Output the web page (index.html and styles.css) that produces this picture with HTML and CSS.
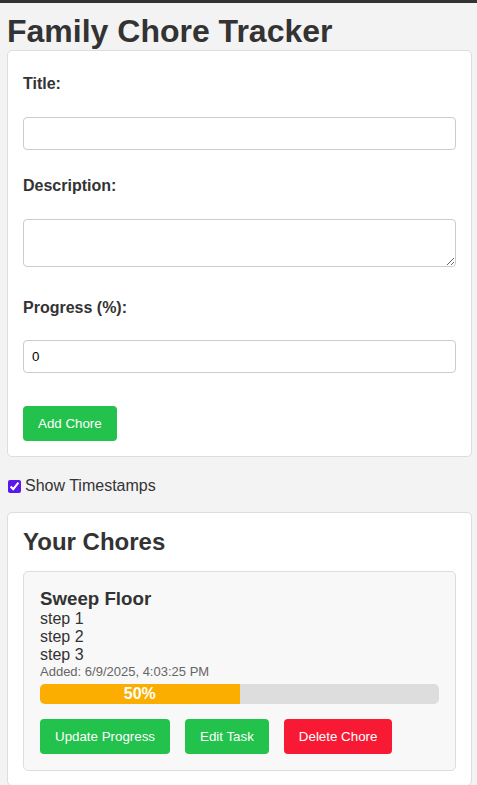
FILE: index.html
```html
<!DOCTYPE html>
<html lang="en">
<head>
<meta charset="utf-8">
<title>Family Chore Tracker</title>
<link rel="stylesheet" href="styles.css">
</head>
<body>
<div class="topbar"></div>
<main class="app">
  <h1 class="app-title">Family Chore Tracker</h1>
  <form class="card chore-form" onsubmit="return false">
    <label class="field-label" for="title">Title:</label>
    <input class="field-input" id="title" type="text">
    <label class="field-label" for="desc">Description:</label>
    <textarea class="field-input field-textarea" id="desc"></textarea>
    <label class="field-label label-progress" for="progress">Progress (%):</label>
    <input class="field-input" id="progress" type="number" value="0">
    <div class="form-actions">
      <button class="btn btn-green" type="submit">Add Chore</button>
    </div>
  </form>
  <label class="toggle">
    <input class="toggle-box" type="checkbox" checked>
    <span>Show Timestamps</span>
  </label>
  <section class="card chores">
    <h2 class="chores-title">Your Chores</h2>
    <div class="chore">
      <h3 class="chore-name">Sweep Floor</h3>
      <div class="chore-desc">step 1<br>step 2<br>step 3</div>
      <div class="chore-time">Added: 6/9/2025, 4:03:25 PM</div>
      <div class="bar">
        <div class="bar-fill" style="width:50%">50%</div>
      </div>
      <div class="chore-actions">
        <button class="btn btn-green" type="button">Update Progress</button>
        <button class="btn btn-green" type="button">Edit Task</button>
        <button class="btn btn-red" type="button">Delete Chore</button>
      </div>
    </div>
  </section>
</main>
</body>
</html>
```
FILE: styles.css
```css
* { box-sizing: border-box; }
html, body { margin: 0; padding: 0; }
body {
  background: #f3f3f3;
  color: #333;
  font-family: "Liberation Sans", Arial, sans-serif;
  font-size: 16px;
}
.topbar { height: 3px; background: #333; }
.app { padding: 10px 5px 20px 7px; }
.app-title {
  margin: 0;
  font-size: 32px;
  font-weight: bold;
  line-height: 37px;
  color: #333;
}
.card {
  background: #fff;
  border: 1px solid #ddd;
  border-radius: 5px;
  padding: 15px;
}
.chore-form { display: flex; flex-direction: column; }
.field-label {
  display: block;
  font-weight: bold;
  line-height: 18px;
  margin: 9px 0 24px 0;
}
.field-label + .field-input { margin-bottom: 18px; }
.field-input {
  display: block;
  width: 100%;
  height: 33px;
  padding: 6px 8px;
  border: 1px solid #ccc;
  border-radius: 4px;
  font-family: "Liberation Sans", Arial, sans-serif;
  font-size: 13.33px;
  color: #000;
  background: #fff;
}
.field-textarea { height: 48px; resize: vertical; margin-bottom: 23px !important; }
.label-progress { margin-bottom: 23px; }
.form-actions { margin-top: 15px; }
.btn {
  border: none;
  border-radius: 4px;
  padding: 10px 15px;
  height: 35px;
  font-family: "Liberation Sans", Arial, sans-serif;
  font-size: 13.33px;
  color: #fff;
  cursor: pointer;
}
.btn-green { background: #22c24c; }
.btn-red { background: #f81a35; }
.toggle {
  display: flex;
  align-items: center;
  margin: 20px 0 0 1px;
  line-height: 18px;
}
.toggle-box {
  width: 13px;
  height: 13px;
  margin: 0 4px 0 0;
  accent-color: #5b16ec;
}
.chores { margin-top: 17px; padding-bottom: 14px; }
.chores-title {
  margin: 0 0 15px 0;
  font-size: 24px;
  line-height: 28px;
}
.chore {
  background: #f8f8f8;
  border: 1px solid #ddd;
  border-radius: 5px;
  padding: 16px;
}
.chore-name {
  margin: 0;
  font-size: 18.72px;
  line-height: 22px;
}
.chore-desc { line-height: 18px; }
.chore-time {
  font-size: 13px;
  line-height: 15px;
  color: #666;
}
.bar {
  margin-top: 5px;
  height: 20px;
  background: #dddddd;
  border-radius: 5px;
  overflow: hidden;
}
.bar-fill {
  height: 100%;
  background: #fcae00;
  color: #fff;
  font-weight: bold;
  text-align: center;
  line-height: 20px;
}
.chore-actions {
  display: flex;
  gap: 15px;
  margin-top: 15px;
}
```
